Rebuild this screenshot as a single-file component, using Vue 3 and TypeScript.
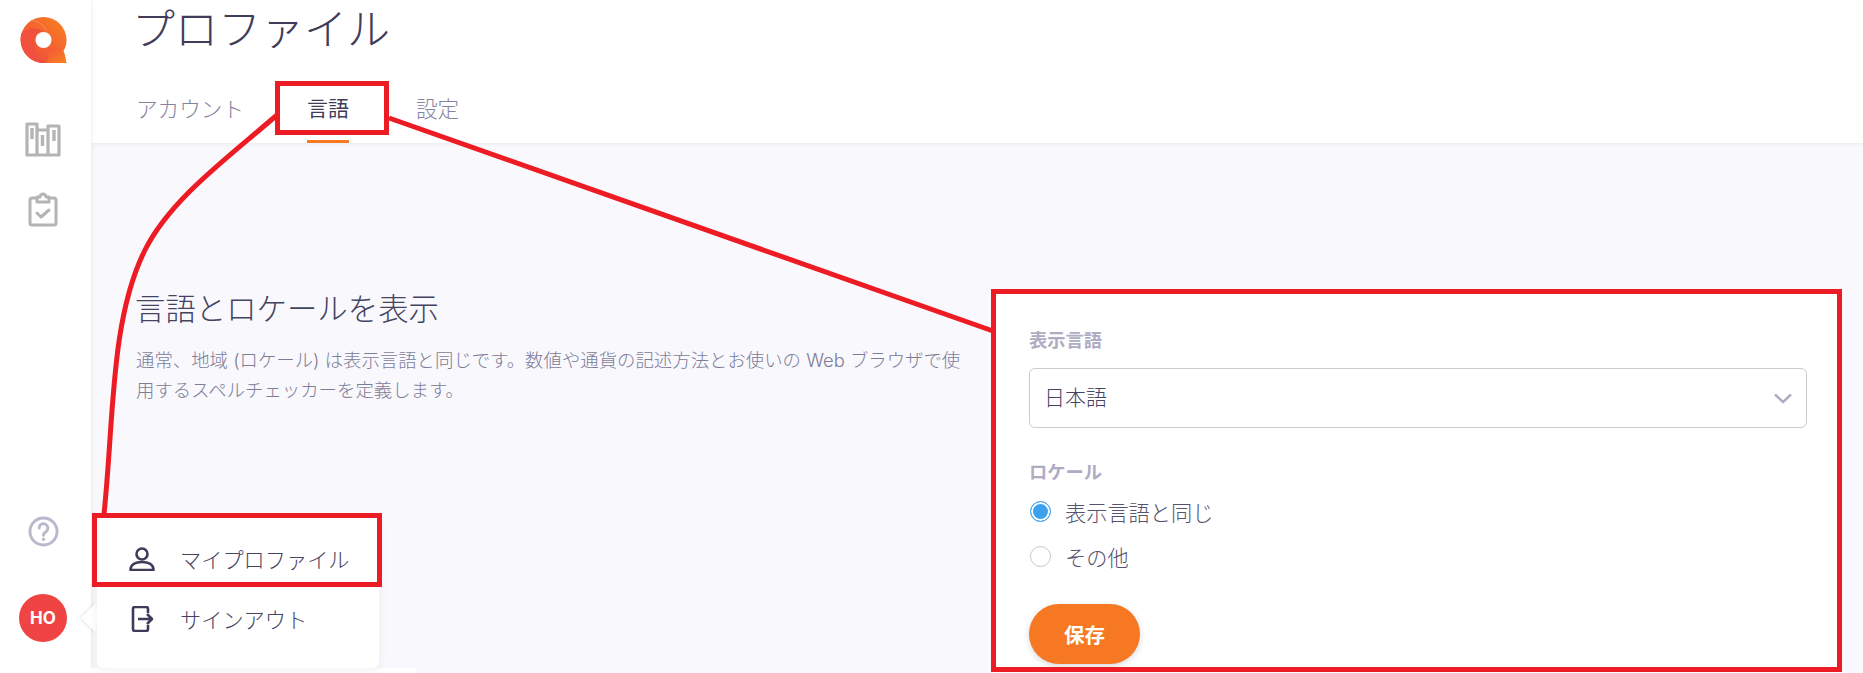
<template>
  <div class="page">
    <aside class="sidebar">
      <div class="side-top">
        <svg class="logo" width="47" height="46" viewBox="0 0 46 46">
          <defs>
            <linearGradient id="lg1" x1="0" y1="1" x2="1" y2="0">
              <stop offset="0" stop-color="#f0453f" />
              <stop offset="1" stop-color="#f8821f" />
            </linearGradient>
            <linearGradient id="lg2" x1="0" y1="0" x2="1" y2="1">
              <stop offset="0" stop-color="#f2503a" />
              <stop offset="1" stop-color="#f8841f" />
            </linearGradient>
          </defs>
          <path d="M23 0a23 23 0 0 1 23 23c0 6-2 10-5 13l5 10H23A23 23 0 0 1 23 0z" fill="url(#lg1)" />
          <path d="M1 16C8 10 16 10 23 14c-8 1-11 8-9 15 2 8 6 13 11 17H23C8 46-3 30 1 16z" fill="#f2503f" />
          <path d="M24 33c6 0 10-3 14-3 4 0 6 3 8 16H25c5-3 3-8-1-13z" fill="url(#lg2)" />
          <path d="M10 3c8 1 14 5 16 11" fill="none" stroke="#f8a070" stroke-width=".6" />
          <circle cx="23" cy="23" r="8" fill="#fff" />
        </svg>
        <svg class="nav-icon" width="36" height="36" viewBox="0 0 36 36" fill="none" stroke="#b4b4b7" stroke-width="3.200">
          <path d="M2 3h10v31H2zM12 9h11v25H12zM23 5h11v29H23z" stroke-linejoin="round" />
          <path d="M7 7v11M17.500 14v11M29 9v11" stroke-width="3.400" />
        </svg>
        <svg class="nav-icon clip" width="30" height="36" viewBox="0 0 30 36" fill="none" stroke="#b4b4b7" stroke-width="3" stroke-linejoin="round" stroke-linecap="round">
          <path d="M9 7H4a2 2 0 0 0-2 2v23a2 2 0 0 0 2 2h22a2 2 0 0 0 2-2V9a2 2 0 0 0-2-2h-5" />
          <path d="M9 11V6h3a3 3 0 0 1 6 0h3v5z" />
          <path d="M9 22l4 4 8-7" />
        </svg>
      </div>
      <div class="side-bottom">
        <svg width="31" height="31" viewBox="0 0 32 32" fill="none" stroke="#b9b9cc" stroke-width="3">
          <circle cx="16" cy="16" r="14" />
          <path d="M11.500 12.500a4.500 4.500 0 1 1 7 3.700c-1.600 1-2.500 1.800-2.500 3.600" stroke-linecap="round" />
          <circle cx="16" cy="24" r="1.700" fill="#b9b9cc" stroke="none" />
        </svg>
        <div class="avatar">HO</div>
      </div>
    </aside>

    <div class="main">
      <header class="header">
        <h1 class="title">プロファイル</h1>
        <nav class="tabs">
          <a v-for="tab in tabs" :key="tab" class="tab" :class="{ active: tab === current }">{{ tab }}</a>
        </nav>
      </header>

      <section class="content">
        <div class="intro">
          <h2>言語とロケールを表示</h2>
          <p>通常、地域 (ロケール) は表示言語と同じです。数値や通貨の記述方法とお使いの Web ブラウザで使用するスペルチェッカーを定義します。</p>
        </div>
        <form class="card" @submit.prevent>
          <label class="field-label">表示言語</label>
          <div class="select">
            <span>日本語</span>
            <svg width="18" height="11" viewBox="0 0 18 11" fill="none" stroke="#aeacc2" stroke-width="2.400">
              <path d="M1 1.500l8 7.500 8-7.500" />
            </svg>
          </div>
          <label class="field-label locale">ロケール</label>
          <div v-for="opt in options" :key="opt" class="radio" :class="{ on: opt === locale }">
            <i></i><span>{{ opt }}</span>
          </div>
          <button class="save" type="submit">保存</button>
        </form>
      </section>
    </div>

    <div class="menu">
      <div class="menu-item first">
        <svg width="26" height="24" viewBox="0 0 26 24" fill="none" stroke="#3f3c5a" stroke-width="2.600">
          <circle cx="13" cy="7" r="5.500" />
          <path d="M1.500 23c0-5.500 5-8 11.500-8s11.500 2.500 11.500 8z" stroke-linejoin="round" />
        </svg>
        <span>マイプロファイル</span>
      </div>
      <div class="menu-item second">
        <svg width="26" height="26" viewBox="0 0 26 26" fill="none" stroke="#3f3c5a" stroke-width="2.600" stroke-linejoin="round">
          <path d="M19 7V3a2 2 0 0 0-2-2H6a2 2 0 0 0-2 2v20a2 2 0 0 0 2 2h11a2 2 0 0 0 2-2v-4" />
          <path d="M9 13h14M18 8l5 5-5 5" />
        </svg>
        <span>サインアウト</span>
      </div>
    </div>
    <div class="menu-arrow"></div>
    <div class="bottom-strip"></div>

    <!-- red annotations drawn on top of the screenshot -->
    <svg class="marks" width="1863" height="673" viewBox="0 0 1863 673" fill="none" stroke="#ed1c24" stroke-width="5">
      <rect x="277.500" y="83.500" width="109" height="49" />
      <rect x="94.500" y="515.500" width="285" height="69" />
      <rect x="993.500" y="291.500" width="846" height="378" />
      <path d="M277 115C225 160 170 200 145 250 110 320 114 420 104 514" />
      <path d="M389 118L993 331" />
    </svg>
  </div>
</template>

<script setup lang="ts">
const tabs = ['アカウント', '言語', '設定']
const current = '言語'
const options = ['表示言語と同じ', 'その他']
const locale = '表示言語と同じ'
</script>

<style>
body {
  margin: 0;
  overflow: hidden;
}
</style>

<style scoped>
.page {
  position: relative;
  display: flex;
  width: 1863px;
  height: 673px;
  overflow: hidden;
  background: #fff;
  font-family: Inter, "Noto Sans CJK JP", sans-serif;
  color: #3f3c5a;
}

.sidebar {
  flex: 0 0 91px;
  box-sizing: border-box;
  padding-right: 5px;
  display: flex;
  flex-direction: column;
  justify-content: space-between;
  align-items: center;
  box-shadow: 1px 0 4px rgba(60, 60, 90, 0.08);
  z-index: 1;
  background: #fff;
}
.side-top {
  display: flex;
  flex-direction: column;
  align-items: center;
  padding-top: 17px;
}
.logo {
  margin-bottom: 58px;
}
.clip {
  margin-top: 34px;
}
.side-bottom {
  display: flex;
  flex-direction: column;
  align-items: center;
  gap: 47px;
  padding-bottom: 31px;
}
.avatar {
  width: 48px;
  height: 48px;
  border-radius: 50%;
  background: #f04343;
  color: #fff;
  font-size: 17px;
  font-weight: 700;
  display: flex;
  align-items: center;
  justify-content: center;
}

.main {
  flex: 1;
  display: flex;
  flex-direction: column;
  background: #f8f8fd;
}

.header {
  height: 143px;
  box-sizing: border-box;
  padding-left: 45px;
  background: #fff;
  box-shadow: 0 1px 4px rgba(60, 60, 90, 0.08);
}
.title {
  margin: 0 0 0 -4px;
  height: 58px;
  font-size: 43px;
  line-height: 58px;
  font-weight: 300;
  color: #3f3c5a;
}
.tabs {
  display: flex;
  gap: 64px;
  margin-top: 33px;
}
.tab {
  position: relative;
  font-size: 21.600px;
  line-height: 36px;
  height: 52px;
  font-weight: 300;
  color: #85849f;
}
.tab.active {
  color: #3f3c5a;
  font-weight: 400;
  font-size: 21px;
  margin: 0 3px 0 -1px;
}
.tab.active::after {
  content: "";
  position: absolute;
  left: 0;
  right: 0;
  bottom: 0;
  height: 3px;
  background: #f97a1f;
}

.content {
  flex: 1;
  display: flex;
  align-items: flex-start;
  justify-content: space-between;
  padding: 148px 21px 0 45px;
}
.intro {
  width: 830px;
  margin-top: -2px;
}
.intro h2 {
  margin: 0 0 0 -1px;
  font-size: 30.400px;
  line-height: 40px;
  font-weight: 300;
  color: #45435f;
}
.intro p {
  margin: 16px 0 0;
  font-size: 18.400px;
  line-height: 30px;
  font-weight: 300;
  color: #7d7c98;
}

.card {
  width: 846px;
  height: 382px;
  box-sizing: border-box;
  padding: 37px 35px 0 33px;
  background: #fff;
  display: flex;
  flex-direction: column;
}
.field-label {
  font-size: 18.300px;
  line-height: 24px;
  font-weight: 700;
  color: #aeacc2;
}
.select {
  margin-top: 16px;
  height: 60px;
  box-sizing: border-box;
  border: 1px solid #cbcbcb;
  border-radius: 6px;
  padding: 0 14px 4px 14px;
  display: flex;
  align-items: center;
  justify-content: space-between;
  font-size: 21px;
  font-weight: 300;
  color: #45435f;
}
.select svg {
  margin-top: 4px;
}
.locale {
  margin-top: 32px;
}
.radio {
  display: flex;
  align-items: center;
  gap: 14px;
  height: 30px;
  margin-top: 15px;
  padding-left: 1px;
  font-size: 21.200px;
  font-weight: 300;
  color: #55536f;
}
.locale + .radio {
  margin-top: 12px;
}
.radio i {
  width: 21px;
  height: 21px;
  box-sizing: border-box;
  border: 1.500px solid #c8c8c8;
  border-radius: 50%;
}
.radio.on i {
  border-color: #3ba1ee;
  background: #3ba1ee;
  box-shadow: inset 0 0 0 2px #fff;
}
.save {
  margin-top: 33px;
  width: 111px;
  height: 60px;
  border: 0;
  border-radius: 30px;
  background: #f67823;
  box-shadow: 0 2px 6px rgba(60, 60, 90, 0.2);
  color: #fff;
  font: 700 20.500px Inter, "Noto Sans CJK JP", sans-serif;
}

.menu {
  position: absolute;
  left: 97px;
  top: 518px;
  width: 282px;
  height: 150px;
  background: #fff;
  border-radius: 0 0 6px 6px;
  box-shadow: 0 2px 8px rgba(60, 60, 90, 0.08);
  z-index: 2;
}
.menu-item {
  position: absolute;
  left: 32px;
  display: flex;
  align-items: center;
  font-size: 21.200px;
  font-weight: 300;
  color: #45435f;
}
.menu-item svg {
  flex: 0 0 26px;
  margin-right: 25px;
}
.first {
  top: 25px;
}
.second {
  top: 85px;
}
.menu-arrow {
  position: absolute;
  left: 85px;
  top: 608px;
  width: 20px;
  height: 20px;
  background: #fff;
  transform: rotate(45deg);
  box-shadow: -1px 1px 3px rgba(60, 60, 90, 0.12);
  z-index: 1;
}
.bottom-strip {
  position: absolute;
  left: 91px;
  top: 668px;
  width: 325px;
  height: 5px;
  background: #fff;
  z-index: 1;
}
.marks {
  position: absolute;
  left: 0;
  top: 0;
  z-index: 3;
  pointer-events: none;
}
</style>
